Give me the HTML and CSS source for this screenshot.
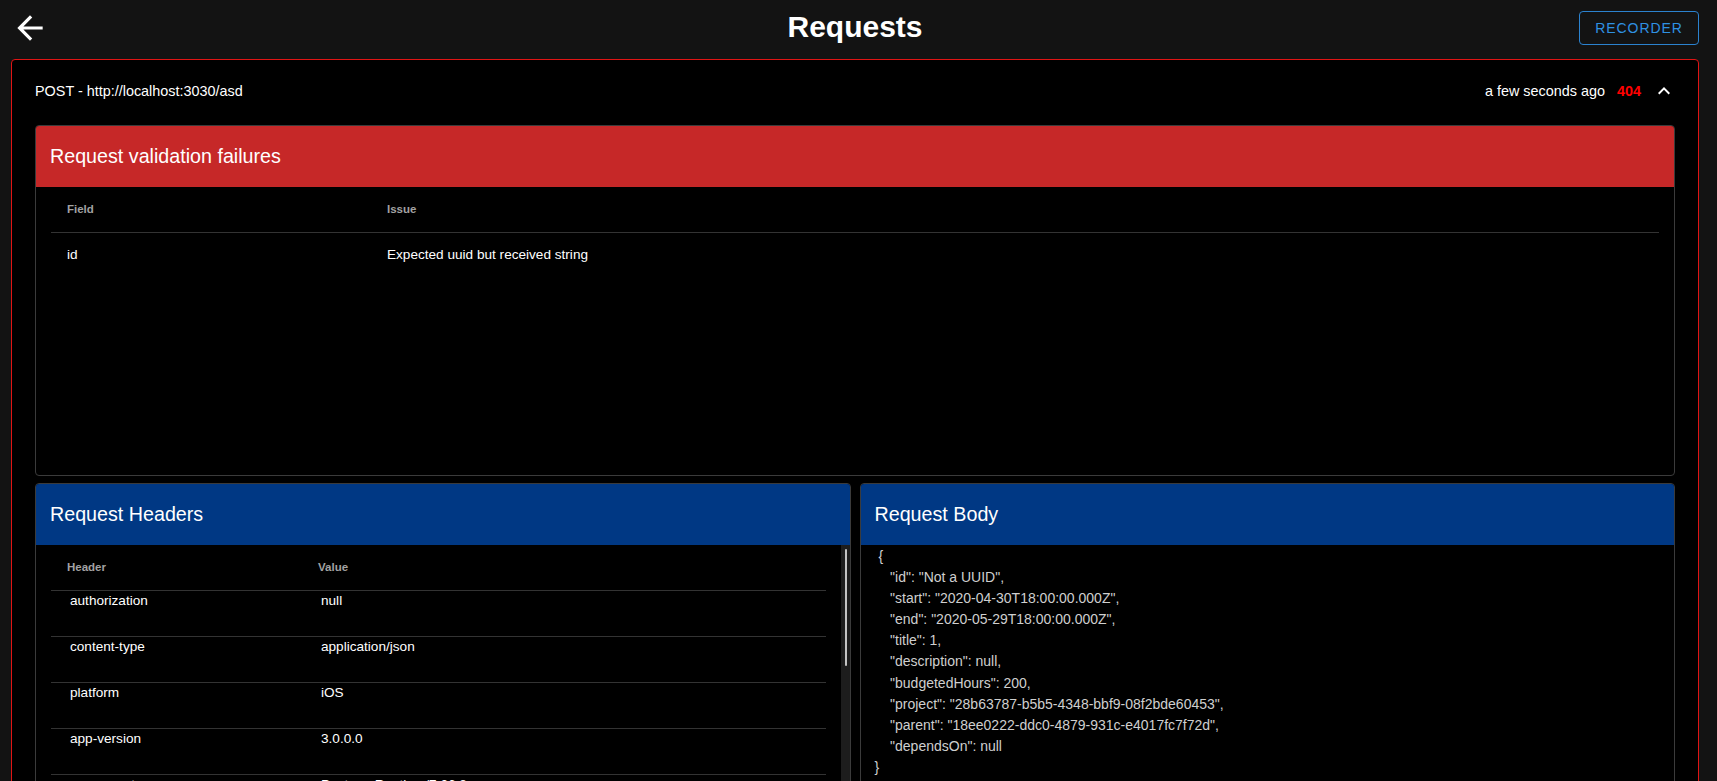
FILE: index.html
```html
<!DOCTYPE html>
<html lang="en">
<head>
<meta charset="utf-8">
<title>Requests</title>
<link rel="stylesheet" href="styles.css">
</head>
<body>
<div class="page">
  <header class="topbar">
    <button class="back" aria-label="Back">
      <svg viewBox="0 0 24 24" width="38" height="38"><path fill="#fff" d="M20 11H7.83l5.59-5.59L12 4l-8 8 8 8 1.41-1.41L7.83 13H20v-2z"/></svg>
    </button>
    <h1 class="title">Requests</h1>
    <button class="recorder">RECORDER</button>
  </header>

  <section class="request-card">
    <div class="summary">
      <span class="method-url">POST - http://localhost:3030/asd</span>
      <div class="meta">
        <span class="time">a few seconds ago</span>
        <span class="status">404</span>
        <svg class="chevron" viewBox="0 0 24 24" width="24" height="24"><path fill="#fff" d="M12 8l-6 6 1.41 1.41L12 10.83l4.59 4.58L18 14z"/></svg>
      </div>
    </div>

    <div class="panel panel-error">
      <div class="panel-head head-red">Request validation failures</div>
      <div class="panel-body">
        <table class="tbl tbl-errors">
          <thead>
            <tr><th class="col-field">Field</th><th>Issue</th></tr>
          </thead>
          <tbody>
            <tr><td>id</td><td>Expected uuid but received string</td></tr>
          </tbody>
        </table>
      </div>
    </div>

    <div class="panel-row">
      <div class="panel panel-tall">
        <div class="panel-head head-blue">Request Headers</div>
        <div class="panel-body scroll-body">
          <table class="tbl tbl-headers">
            <thead>
              <tr><th class="col-header">Header</th><th>Value</th></tr>
            </thead>
            <tbody>
              <tr><td>authorization</td><td>null</td></tr>
              <tr><td>content-type</td><td>application/json</td></tr>
              <tr><td>platform</td><td>iOS</td></tr>
              <tr><td>app-version</td><td>3.0.0.0</td></tr>
              <tr><td>user-agent</td><td>PostmanRuntime/7.26.8</td></tr>
              <tr><td>accept</td><td>*/*</td></tr>
            </tbody>
          </table>
          <div class="scroll-track"><div class="scroll-thumb"></div></div>
        </div>
      </div>
      <div class="panel panel-tall">
        <div class="panel-head head-blue">Request Body</div>
        <div class="panel-body">
<pre class="json"> {
    "id": "Not a UUID",
    "start": "2020-04-30T18:00:00.000Z",
    "end": "2020-05-29T18:00:00.000Z",
    "title": 1,
    "description": null,
    "budgetedHours": 200,
    "project": "28b63787-b5b5-4348-bbf9-08f2bde60453",
    "parent": "18ee0222-ddc0-4879-931c-e4017fc7f72d",
    "dependsOn": null
}</pre>
        </div>
      </div>
    </div>
  </section>
</div>
</body>
</html>
```

FILE: styles.css
```css
* { box-sizing: border-box; }

html, body {
  margin: 0;
  padding: 0;
  background: #131313;
  color: #fff;
  font-family: "Liberation Sans", Arial, sans-serif;
}

.page {
  padding: 0 18px 0 11px;
}

.topbar {
  height: 56px;
  margin-bottom: 3px;
  display: grid;
  grid-template-columns: 1fr auto 1fr;
  align-items: center;
}

.back {
  justify-self: start;
  background: none;
  border: 0;
  padding: 0;
  margin: 0;
  width: 38px;
  height: 38px;
  display: flex;
  cursor: pointer;
}

.title {
  margin: 0;
  margin-top: -2px;
  font-size: 30px;
  line-height: 34px;
  font-weight: 700;
  color: #fff;
}

.recorder {
  justify-self: end;
  width: 120px;
  height: 34px;
  background: transparent;
  border: 1px solid #2b82cf;
  border-radius: 4px;
  color: #2f91e2;
  font-family: "Liberation Sans", Arial, sans-serif;
  font-size: 14px;
  letter-spacing: 0.9px;
  padding: 0;
  cursor: pointer;
}

.request-card {
  background: #000;
  border: 1px solid #e01414;
  border-radius: 4px;
  padding: 0 23px 40px 23px;
}

.summary {
  height: 62px;
  margin-bottom: 3px;
  display: flex;
  align-items: center;
  justify-content: space-between;
  font-size: 14.4px;
}

.meta {
  display: flex;
  align-items: center;
  margin-right: -1px;
}

.status {
  margin-left: 12px;
  color: #ff0000;
  font-weight: 700;
}

.chevron {
  margin-left: 11px;
  display: block;
}

.panel {
  border: 1px solid #3b3b3b;
  border-radius: 4px;
  overflow: hidden;
  background: #000;
  display: flex;
  flex-direction: column;
}

.panel-error {
  height: 351px;
  margin-bottom: 7px;
}

.panel-tall {
  height: 420px;
}

.panel-head {
  height: 61px;
  flex: none;
  display: flex;
  align-items: center;
  padding-left: 14px;
  font-size: 19.7px;
  color: #fff;
}

.head-red { background: #c62828; }
.head-blue { background: #003884; }

.panel-body {
  flex: 1;
  padding: 0 15px;
  overflow: hidden;
}

.scroll-body {
  position: relative;
  padding-right: 24px;
}

.scroll-track {
  position: absolute;
  top: 0;
  right: 0;
  bottom: 0;
  width: 9px;
  background: #1d1d1d;
}

.scroll-thumb {
  position: absolute;
  top: 4px;
  left: 4px;
  width: 2px;
  height: 117px;
  background: #c4c4c4;
  border-radius: 1px;
}

.panel-row {
  display: grid;
  grid-template-columns: 1fr 1fr;
  gap: 9px;
}

.tbl {
  width: 100%;
  border-collapse: collapse;
}

.tbl th {
  height: 45px;
  padding: 0 16px;
  text-align: left;
  vertical-align: middle;
  font-size: 11.5px;
  font-weight: 700;
  color: #a2a2a2;
  border-bottom: 1px solid #333;
}

.col-field { width: 320px; }
.col-header { width: 251px; }

.tbl-errors td {
  height: 45px;
  padding: 0 16px;
  vertical-align: middle;
  font-size: 13.6px;
  color: #fff;
}

.tbl-headers td {
  height: 46px;
  padding: 0 20px 0 19px;
  vertical-align: top;
  font-size: 13.6px;
  line-height: 20px;
  color: #fff;
  border-bottom: 1px solid #333;
}

.json {
  margin: 0;
  padding: 1px 0 0 0;
  margin-left: -1px;
  font-family: "Liberation Sans", Arial, sans-serif;
  font-size: 14px;
  line-height: 21.1px;
  color: #cfcfcf;
  white-space: pre;
}
```
